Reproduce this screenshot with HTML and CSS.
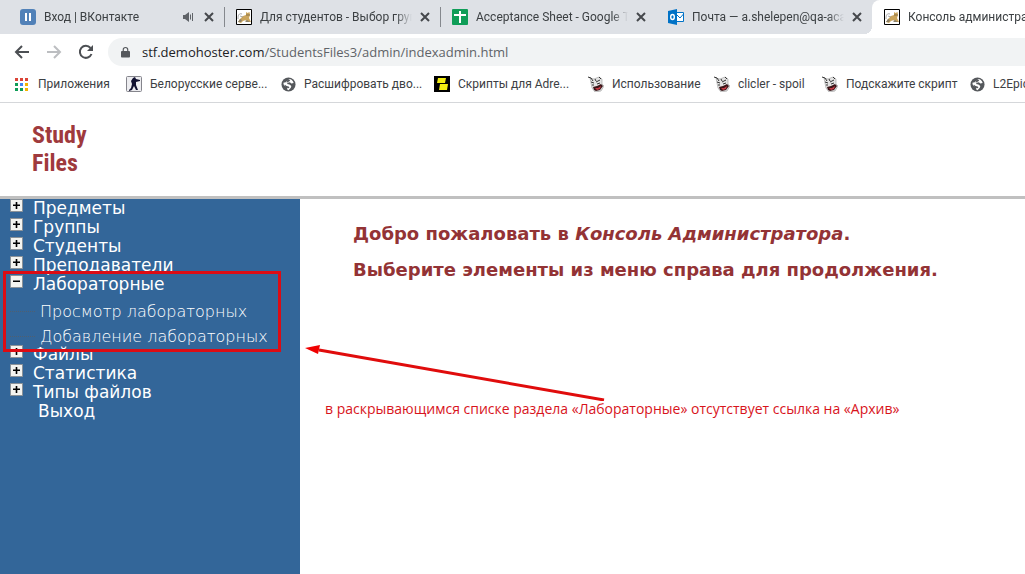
FILE: index.html
```html
<!DOCTYPE html>
<html lang="ru">
<head>
<meta charset="utf-8">
<title>Консоль администратора</title>
<link rel="stylesheet" href="styles.css">
</head>
<body>
<svg class="sprite" aria-hidden="true">
  <symbol id="close" viewBox="0 0 10 10"><path d="M1 1l8 8M9 1L1 9" stroke="#45484c" stroke-width="2" fill="none"/></symbol>
  <symbol id="tomcat" viewBox="0 0 16 16">
    <path fill="#fff" stroke="#000" d="M.5.5h15v15H.5z"/>
    <path fill="#cba55c" d="M2 13l2-3 3-3 3-1 0-3 1.500 1L13.500 3l.5 3-1 3 2 4-3 0-2-2-3 1-2 2z"/>
    <path fill="#8b8068" d="M2 13l2-3 2 1-1 2zM9 12l2-1 3 2-4 0z"/>
    <path fill="#4a4030" d="M10.500 5.500h1v1h-1zM12.500 5.500h1v1h-1z"/>
    <path stroke="#888" stroke-width=".7" fill="none" d="M2 10c0-4 1-6 4-5M4 7l3 1"/>
  </symbol>
  <symbol id="globe" viewBox="0 0 16 16">
    <circle cx="8" cy="8" r="7.5" fill="#55585c"/>
    <path fill="#fff" d="M9 2c2 0 4 2 4.500 4.500L11 7 9.500 5.500 7 6 6.500 7.500 9 8l2 1.500-.5 2L8 14c-2-.3-1-2-1.500-3L3 8.500 2.500 6 5 5.500z"/>
    <path fill="#55585c" d="M7 3l3 0-1 1.500-3 1.500zM4 8l2 1.500 2 .5 1 1-1 1-3-1z"/>
  </symbol>
  <symbol id="cow" viewBox="0 0 16 16">
    <path fill="#e4e4e4" stroke="#888" stroke-width=".5" d="M2 2l4 1 5-2 3 2 0 5 2 2-3 5-6 1-3-4-1-5z"/>
    <path stroke="#333" stroke-width="1" fill="none" d="M0 1l3 1 2 3M3 6l3 1M8 6l4-2M7 3l1 2M11 1l2 2M4 9l2 0M9 8l3-1"/>
    <path fill="#3a1518" d="M5 11l4-1 4-2 2 2-3 4-4 1-2-1z"/>
    <path fill="#c43b45" d="M7 12l3 0 3-2-1 3-3 1z"/>
  </symbol>
  <symbol id="plus" viewBox="0 0 13 13"><path fill="#f4f4f0" stroke="#8b9298" stroke-width="1" d="M.5.5h12v12H.5z"/><path fill="#000" d="M3 5.500h7v1.500H3zM5.700 3h1.600v7H5.700z"/></symbol>
  <symbol id="minus" viewBox="0 0 13 13"><path fill="#f4f4f0" stroke="#8b9298" stroke-width="1" d="M.5.5h12v12H.5z"/><path fill="#000" d="M3 5.500h7v1.500H3z"/></symbol>
</svg>

<div class="browser">
  <nav class="tabs" aria-label="Вкладки">
    <div class="tab">
      <svg class="icon" viewBox="0 0 16 16"><rect width="16" height="16" rx="3" fill="#5181b8"/><path fill="#fff" d="M5 4h2v8H5zM9 4h2v8H9z"/></svg>
      <span class="tab-title">Вход | ВКонтакте</span>
      <svg class="sound" viewBox="0 0 12 12"><path fill="#5f6368" d="M1 4h2l4-3v10L3 8H1z"/><path stroke="#5f6368" fill="none" d="M8.500 3.500v5M10.500 2v8"/></svg>
      <button class="close" aria-label="Закрыть"><svg><use href="#close"/></svg></button>
    </div>
    <div class="tab">
      <svg class="icon"><use href="#tomcat"/></svg>
      <span class="tab-title">Для студентов - Выбор груп</span>
      <button class="close" aria-label="Закрыть"><svg><use href="#close"/></svg></button>
    </div>
    <div class="tab">
      <svg class="icon" viewBox="0 0 16 16"><rect width="16" height="16" rx="1" fill="#0f9d58"/><path fill="#fff" d="M2 5h12v2H9v7H7V7H2zM7 2h2v4H7z"/></svg>
      <span class="tab-title">Acceptance Sheet - Google Т</span>
      <button class="close" aria-label="Закрыть"><svg><use href="#close"/></svg></button>
    </div>
    <div class="tab tab-last">
      <svg class="icon" viewBox="0 0 16 16"><path fill="#fff" stroke="#0072c6" d="M8 3.500h7.500v9H8z"/><path stroke="#0072c6" fill="none" d="M9 6l3 3 3.500-4"/><path fill="#0072c6" d="M0 2l9-2v16l-9-2z"/><ellipse cx="4.500" cy="8" rx="1.800" ry="2.500" fill="none" stroke="#fff" stroke-width="1.400"/></svg>
      <span class="tab-title">Почта — a.shelepen@qa-aca</span>
      <button class="close" aria-label="Закрыть"><svg><use href="#close"/></svg></button>
    </div>
    <div class="tab tab-active">
      <svg class="icon"><use href="#tomcat"/></svg>
      <span class="tab-title">Консоль администратора</span>
    </div>
  </nav>

  <div class="toolbar">
    <button class="tool" aria-label="Назад"><svg viewBox="0 0 16 16"><path d="M15 8H2M8 2L2 8l6 6" stroke="#4c4f53" stroke-width="2" fill="none"/></svg></button>
    <button class="tool" aria-label="Вперёд"><svg viewBox="0 0 16 16"><path d="M1 8h13M8 2l6 6-6 6" stroke="#bcbec1" stroke-width="2" fill="none"/></svg></button>
    <button class="tool" aria-label="Обновить"><svg viewBox="0 0 16 16"><path d="M13.500 10A6 6 0 1 1 12.500 4" stroke="#4c4f53" stroke-width="2" fill="none"/><path fill="#4c4f53" d="M15 1v6H9z"/></svg></button>
    <div class="omnibox">
      <svg class="lock" viewBox="0 0 10 12"><path fill="#55585c" d="M1 5h8q1 0 1 1v5q0 1-1 1H1q-1 0-1-1V6q0-1 1-1z"/><path d="M2.500 5V3.500a2.500 2.500 0 0 1 5 0V5" stroke="#55585c" stroke-width="1.300" fill="none"/></svg>
      <span class="url"><span class="host">stf.demohoster.com</span>/StudentsFiles3/admin/indexadmin.html</span>
    </div>
  </div>

  <nav class="bookmarks" aria-label="Закладки">
    <a href="#"><svg class="apps" viewBox="0 0 13 13"><path fill="#db4437" d="M0 0h3v3H0zM5 0h3v3H5zM10 0h3v3h-3z"/><path fill="#0f9d58" d="M0 5h3v3H0zM0 10h3v3H0zM5 10h3v3H5z"/><path fill="#4285f4" d="M5 5h3v3H5z"/><path fill="#f4b400" d="M10 5h3v3h-3zM10 10h3v3h-3z"/></svg>Приложения</a>
    <a href="#"><svg class="icon" viewBox="0 0 16 16"><rect x=".5" y=".5" width="15" height="15" rx="1" fill="#ededf0" stroke="#85858c"/><path fill="#101030" d="M7 2l2-1 1 2 4 1v1l-4 1 0 3 2 5h-2l-2-4-2 4-3 1v-1l2-2 1-4-1-3z"/></svg>Белорусские серве...</a>
    <a href="#"><svg class="globe"><use href="#globe"/></svg>Расшифровать дво...</a>
    <a href="#"><svg class="icon" viewBox="0 0 16 16"><path d="M0 0h16v16H0z"/><path fill="#f3ee12" d="M4 2h8l-1 5H3zM6 8h8l-1 6H5z"/></svg>Скрипты для Adre...</a>
    <a href="#"><svg class="icon"><use href="#cow"/></svg>Использование</a>
    <a href="#"><svg class="icon"><use href="#cow"/></svg>clicler - spoil</a>
    <a href="#"><svg class="icon"><use href="#cow"/></svg>Подскажите скрипт</a>
    <a href="#"><svg class="globe"><use href="#globe"/></svg>L2Epic</a>
  </nav>
</div>

<header class="site-header"><a class="logo" href="#">Study<br>Files</a></header>

<div class="page">
  <nav class="sidebar" aria-label="Меню">
    <ul class="menu">
      <li><button class="toggle" aria-label="Развернуть"><svg><use href="#plus"/></svg></button><a href="#">Предметы</a></li>
      <li><button class="toggle" aria-label="Развернуть"><svg><use href="#plus"/></svg></button><a href="#">Группы</a></li>
      <li><button class="toggle" aria-label="Развернуть"><svg><use href="#plus"/></svg></button><a href="#">Студенты</a></li>
      <li><button class="toggle" aria-label="Развернуть"><svg><use href="#plus"/></svg></button><a href="#">Преподаватели</a></li>
      <li class="open"><button class="toggle" aria-label="Свернуть"><svg><use href="#minus"/></svg></button><a href="#">Лабораторные</a>
        <ul class="submenu">
          <li><a href="#">Просмотр лабораторных</a></li>
          <li><a href="#">Добавление лабораторных</a></li>
        </ul>
        <span class="highlight"></span>
      </li>
      <li><button class="toggle" aria-label="Развернуть"><svg><use href="#plus"/></svg></button><a href="#">Файлы</a></li>
      <li><button class="toggle" aria-label="Развернуть"><svg><use href="#plus"/></svg></button><a href="#">Статистика</a></li>
      <li><button class="toggle" aria-label="Развернуть"><svg><use href="#plus"/></svg></button><a href="#">Типы файлов</a></li>
      <li class="exit"><a href="#">Выход</a></li>
    </ul>
  </nav>
  <main class="content">
    <h1>Добро пожаловать в <em>Консоль Администратора</em>.</h1>
    <h1>Выберите элементы из меню справа для продолжения.</h1>
    <div class="note">
      <svg class="arrow" viewBox="0 0 300 56"><path d="M14 5L299 55" stroke="#e00c0c" stroke-width="3"/><path fill="#f00000" d="M0 3L15 0 13 9z"/></svg>
      <p>в раскрывающимся списке раздела «Лабораторные» отсутствует ссылка на «Архив»</p>
    </div>
  </main>
</div>
</body>
</html>
```
FILE: styles.css
```css
* { box-sizing: border-box; }
html, body { height: 100%; }
body {
  margin: 0;
  display: flex;
  flex-direction: column;
  overflow: hidden;
  background: #fff;
  font-family: "DejaVu Sans", Verdana, sans-serif;
}
button { padding: 0; border: 0; background: none; display: flex; }
a { color: inherit; text-decoration: none; }
ul { margin: 0; padding: 0; list-style: none; }
svg { display: block; flex: none; }
.sprite { position: absolute; width: 0; height: 0; }
.icon { width: 16px; height: 16px; }

/* Browser chrome */
.browser { flex: none; font-family: Roboto, "Noto Sans", sans-serif; font-size: 12px; color: #3c4043; border-bottom: 1px solid #d5d7da; }
.tabs { display: flex; height: 34px; padding-left: 8px; background: #dee1e6; overflow: hidden; }
.tab { flex: none; width: 216px; display: flex; align-items: center; gap: 8px; padding: 0 10px 0 12px; position: relative; }
.tab::after { content: ""; position: absolute; right: -1px; top: 7px; width: 1px; height: 20px; background: #85888d; }
.tab-title {
  flex: 1;
  min-width: 0;
  overflow: hidden;
  white-space: nowrap;
  -webkit-mask-image: linear-gradient(to left, transparent, #000 16px);
  mask-image: linear-gradient(to left, transparent, #000 16px);
}
.sound { width: 12px; height: 12px; margin-right: 2px; }
.close svg { width: 10px; height: 10px; }
.tab-last { border-bottom-right-radius: 8px; background: #dee1e6; }
.tab-last::after, .tab-active::after { display: none; }
.tab-active { background: #fff; border-top-left-radius: 8px; }
.tab-active::before {
  content: ""; position: absolute; left: -8px; bottom: 0; width: 8px; height: 8px;
  background: radial-gradient(circle at 0 0, #dee1e6 8px, #fff 8px);
}
.toolbar { display: flex; align-items: center; gap: 16px; padding: 4px 0 2px 14px; }
.tool svg { width: 16px; height: 16px; }
.omnibox { flex: 1; display: flex; align-items: center; gap: 12px; height: 28px; margin: 0 -20px 0 -2px; padding-left: 13px; border-radius: 14px; background: #f1f3f4; font-family: "Open Sans", sans-serif; font-size: 13px; color: #5f6368; }
.lock { width: 9px; height: 12px; }
.host { color: #202124; }
.bookmarks { display: grid; grid-template-columns: 111px 155px 153px 154px 126px 108px 148px auto; height: 34px; padding: 0 0 2px 15px; align-items: center; overflow: hidden; }
.bookmarks a { display: flex; align-items: center; gap: 8px; white-space: nowrap; }
.apps { width: 13px; height: 13px; margin-right: 2px; }
.globe { width: 15px; height: 15px; }

/* Site */
.site-header { flex: none; padding: 18px 32px 19px; border-bottom: 3px solid #c0c0c0; }
.logo { display: block; font: bold 24px/28px "Roboto Condensed", "Open Sans Condensed", "DejaVu Sans Condensed", sans-serif; color: #9f3a3d; }
.page { flex: 1; display: flex; min-height: 0; }
.sidebar { flex: none; width: 300px; background: #336699; color: #fff; font-size: 17px; line-height: 19px; }
.menu > li { display: grid; grid-template-columns: 13px 1fr; column-gap: 10px; padding-left: 10px; }
.toggle svg { width: 13px; height: 13px; }
.toggle { align-self: start; }
.menu > .open { position: relative; }
.submenu { grid-column: 1 / -1; padding-top: 9px; display: grid; row-gap: 8px; font-size: 16px; line-height: 17px; font-weight: 200; }
.submenu li { display: flex; align-items: center; gap: 5px; }
.submenu li::before { content: ""; width: 25px; border-top: 1px dotted #505f70; }
.highlight { position: absolute; inset: -4px 19px -7px 3px; border: 3px solid #dc0c14; pointer-events: none; }
.menu > .exit { padding-left: 38px; display: block; }
.content { flex: 1; min-width: 0; padding: 24px 24px 24px 53px; }
h1 { margin: 0 0 14px; font-size: 18px; line-height: 22px; color: #933335; }
.note { position: relative; margin: 118px 0 0 -28px; font: 14px/20px "Open Sans", sans-serif; color: #d8141c; }
.note p { margin: 0; white-space: nowrap; }
.arrow { position: absolute; left: -20px; bottom: 18px; width: 300px; height: 56px; }
```
